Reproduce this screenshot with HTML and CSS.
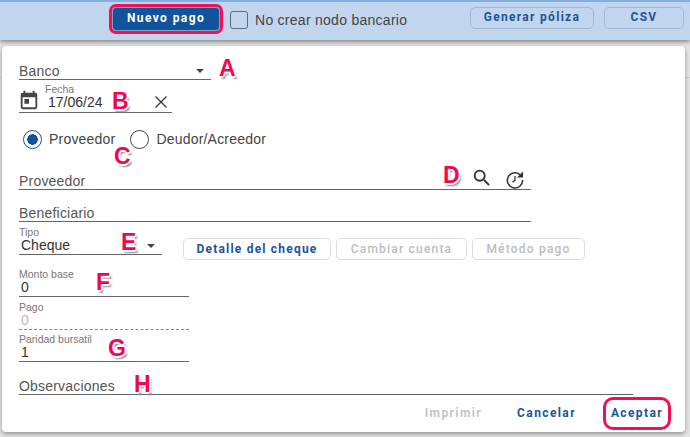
FILE: index.html
```html
<!DOCTYPE html>
<html lang="en">

<head>
    <meta http-equiv="Content-Type" content="text/html; charset=UTF-8">
    <meta name="viewport" content="width=device-width, initial-scale=1.0">
    <title>Nuevo pago</title>
    <link rel="stylesheet" href="styles.css">
</head>

<body>

    <div class="toolbar">
        <button class="btn-primary">Nuevo pago</button>
        <label class="check"><span class="check-box"></span>No crear nodo bancario</label>
        <div class="toolbar-right">
            <button class="btn-tool btn-poliza">Generar póliza</button>
            <button class="btn-tool btn-csv">CSV</button>
        </div>
    </div>

    <div class="dialog">
        <div class="form">
            <div class="field f-banco w-banco">
                <span class="placeholder">Banco</span>
                <span class="arrow"></span>
                <span class="mark mark-a">A</span>
            </div>

            <div class="field f-fecha w-fecha">
                <svg class="icon-cal" width="22" height="22" viewBox="0 0 24 24"><path fill="#444" d="M19 4h-1V2h-2v2H8V2H6v2H5a2 2 0 0 0-2 2v14a2 2 0 0 0 2 2h14a2 2 0 0 0 2-2V6a2 2 0 0 0-2-2zm0 16H5V9h14v11zM7 11h5v5H7z"/></svg>
                <div class="fecha-col">
                    <span class="small-label">Fecha</span>
                    <span class="value">17/06/24</span>
                </div>
                <svg class="icon-x" width="12" height="12" viewBox="0 0 12 12"><path stroke="#333" stroke-width="1.2" fill="none" d="M.5.5l11 11M11.5.5l-11 11"/></svg>
                <span class="mark mark-b">B</span>
            </div>

            <div class="radios">
                <span class="radio radio-on"></span>
                <span class="radio-text">Proveedor</span>
                <span class="radio"></span>
                <span class="radio-text">Deudor/Acreedor</span>
                <span class="mark mark-c">C</span>
            </div>

            <div class="field f-prov w-prov">
                <span class="placeholder">Proveedor</span>
                <svg class="icon-search" width="22" height="22" viewBox="0 0 24 24"><path fill="#333" d="M15.5 14h-.79l-.28-.27A6.47 6.47 0 0 0 16 9.5 6.5 6.5 0 1 0 9.5 16c1.61 0 3.09-.59 4.23-1.57l.27.28v.79l5 4.99L20.49 19l-4.99-5zm-6 0C7.01 14 5 11.99 5 9.5S7.01 5 9.5 5 14 7.01 14 9.5 11.99 14 9.5 14z"/></svg>
                <svg class="icon-history" width="20" height="20" viewBox="0 0 20 20"><path fill="none" stroke="#333" stroke-width="1.5" d="M15.6 5.2A7.6 7.6 0 1 0 17.6 10"/><path fill="#333" d="M18 1.5v6h-6z"/><path fill="none" stroke="#333" stroke-width="1.3" d="M10 6v4.4l-2.6 1.8"/></svg>
                <span class="mark mark-d">D</span>
            </div>

            <div class="field f-benef w-prov">
                <span class="placeholder">Beneficiario</span>
            </div>

            <div class="tipo-row">
                <div class="field f-tipo w-tipo">
                    <div class="stack">
                        <span class="small-label">Tipo</span>
                        <span class="value">Cheque</span>
                    </div>
                    <span class="arrow"></span>
                    <span class="mark mark-e">E</span>
                </div>
                <button class="btn-form">Detalle del cheque</button>
                <button class="btn-form btn-off btn-cuenta">Cambiar cuenta</button>
                <button class="btn-form btn-off btn-metodo">Método pago</button>
            </div>

            <div class="field f-monto w-monto">
                <div class="stack">
                    <span class="small-label">Monto base</span>
                    <span class="value">0</span>
                </div>
                <span class="mark mark-f">F</span>
            </div>

            <div class="field f-pago w-monto field-off">
                <div class="stack">
                    <span class="small-label">Pago</span>
                    <span class="value value-off">0</span>
                </div>
            </div>

            <div class="field f-paridad w-monto">
                <div class="stack">
                    <span class="small-label">Paridad bursatil</span>
                    <span class="value">1</span>
                </div>
                <span class="mark mark-g">G</span>
            </div>

            <div class="field f-obs w-obs">
                <span class="placeholder">Observaciones</span>
                <span class="mark mark-h">H</span>
            </div>
        </div>

        <div class="footer">
            <button class="btn-text btn-text-off">Imprimir</button>
            <button class="btn-text btn-cancel">Cancelar</button>
            <button class="btn-text btn-accept">Aceptar</button>
        </div>
    </div>

</body>

</html>
```

FILE: styles.css
```css
html,
body {
    margin: 0;
    height: 437px;
    overflow: hidden;
}

body {
    font-family: "Liberation Sans", Arial, sans-serif;
    background: linear-gradient(#cfcfcf, #cfcfcf) 0 77px / 100% 1px no-repeat #e3e3e3;
    color: #444;
}

button {
    font-family: Roboto, "Liberation Sans", sans-serif;
    cursor: pointer;
}

.toolbar {
    height: 38px;
    border-top: 2px solid #84ade2;
    background-color: #c1d6ee;
    box-shadow: 0 2px 4px rgba(0, 0, 0, 0.4);
    display: flex;
    align-items: flex-start;
    padding-left: 112px;
    padding-right: 6px;
}

.btn-primary {
    width: 108px;
    height: 24px;
    margin-top: 5px;
    background-color: #11549c;
    color: white;
    border: 1px solid #7fa0c8;
    border-radius: 4px;
    font-size: 12px;
    font-weight: 700;
    letter-spacing: 1.4px;
    padding: 0 0 3px;
    outline: 3px solid #f0105a;
    outline-offset: 0;
}

.check {
    display: flex;
    align-items: center;
    margin-top: 9px;
    margin-left: 10px;
    font-size: 14px;
    letter-spacing: .27px;
    color: #444;
}

.check-box {
    width: 16px;
    height: 16px;
    margin-right: 7px;
    border: 1px solid #5d6b7a;
    border-radius: 3px;
}

.toolbar-right {
    display: flex;
    gap: 10px;
    margin-left: auto;
}

.btn-tool {
    height: 22px;
    margin-top: 5px;
    background: transparent;
    border: 1px solid #a3b9d3;
    border-radius: 5px;
    color: #1d5499;
    font-size: 12px;
    font-weight: 700;
    letter-spacing: 1.3px;
    padding: 0 0 3px;
}

.btn-poliza {
    width: 124px;
}

.btn-csv {
    width: 80px;
}

.dialog {
    width: 683px;
    height: 386px;
    margin: 6px 0 0 2px;
    background-color: white;
    border-radius: 4px;
    box-shadow: 0 2px 4px rgba(0, 0, 0, 0.35);
    display: flex;
    flex-direction: column;
}

.form {
    padding: 14px 0 0 17px;
    height: 335px;
    box-sizing: border-box;
}

.field {
    display: flex;
    align-items: flex-end;
    position: relative;
    box-sizing: border-box;
    border-bottom: 1px solid #666;
    font-size: 14px;
}

.field-off {
    border-bottom: 1px dashed #888;
}

.w-banco {
    width: 192px;
}

.w-fecha {
    width: 153px;
}

.w-prov {
    width: 512px;
}

.w-tipo {
    width: 143px;
}

.w-monto {
    width: 170px;
}

.w-obs {
    width: 614px;
}

.f-banco {
    height: 20px;
}

.f-fecha {
    height: 33px;
}

.f-prov {
    height: 25px;
}

.f-benef {
    height: 32px;
}

.f-tipo {
    height: 33px;
}

.f-monto {
    height: 42px;
}

.f-pago {
    height: 33px;
}

.f-paridad {
    height: 32px;
}

.f-obs {
    height: 33px;
}

.placeholder {
    color: #555;
    letter-spacing: .2px;
    line-height: 15px;
}

.value {
    color: #333;
    line-height: 15px;
    padding-left: 2px;
    padding-bottom: 1px;
}

.value-off {
    color: #bbb;
}

.small-label {
    font-size: 10.5px;
    line-height: 11px;
    color: #777;
}

.stack {
    display: flex;
    flex-direction: column;
}

.arrow {
    width: 0;
    height: 0;
    margin-left: auto;
    margin-right: 7px;
    margin-bottom: 6px;
    border-top: 4px solid #444;
    border-left: 4px solid transparent;
    border-right: 4px solid transparent;
}

.icon-cal {
    margin-bottom: 1px;
    margin-left: -1px;
    margin-right: 5px;
}

.fecha-col {
    display: flex;
    flex-direction: column;
    padding-bottom: 1px;
}

.fecha-col .value {
    padding-left: 3px;
}

.icon-x {
    margin-left: auto;
    margin-right: 5px;
    margin-bottom: 4px;
}

.icon-search {
    margin-left: auto;
    margin-right: 12px;
}

.icon-history {
    margin-right: 6px;
    margin-bottom: -1px;
}

.radios {
    height: 52px;
    display: flex;
    align-items: center;
    position: relative;
    padding-left: 4px;
    font-size: 14px;
    letter-spacing: .2px;
    box-sizing: border-box;
}

.radio {
    width: 19px;
    height: 19px;
    box-sizing: border-box;
    border: 1px solid #444;
    border-radius: 50%;
    flex-shrink: 0;
}

.radio-on {
    border: 1.5px solid #11549c;
    background: radial-gradient(circle, #11549c 0 5px, transparent 5.5px);
}

.radio-text {
    margin-left: 7px;
    margin-right: 15px;
    color: #444;
}

.tipo-row {
    display: flex;
    align-items: flex-end;
}

.btn-form {
    height: 22px;
    margin-left: 5px;
    margin-bottom: -5px;
    background: white;
    border: 1px solid #ddd;
    border-radius: 5px;
    color: #1d5499;
    font-size: 12px;
    font-weight: 700;
    letter-spacing: 1.2px;
    padding: 0;
    width: 148px;
}

.tipo-row .field + .btn-form {
    margin-left: 21px;
}

.btn-off {
    color: #bdbdbd;
    font-weight: 500;
}

.btn-cuenta {
    width: 131px;
}

.btn-metodo {
    width: 113px;
}

.footer {
    display: flex;
    align-items: center;
    justify-content: flex-end;
    height: 51px;
    padding-top: 13px;
    padding-right: 17px;
    box-sizing: border-box;
}

.btn-text {
    background: none;
    border: none;
    color: #1d5499;
    font-size: 12px;
    font-weight: 700;
    letter-spacing: 1.4px;
    padding: 0;
}

.btn-text-off {
    color: #c4c4c4;
    margin-right: 35px;
}

.btn-cancel {
    margin-right: 30px;
}

.btn-accept {
    width: 62px;
    height: 27px;
    border-radius: 7px;
    outline: 3px solid #f0105a;
}

.mark {
    position: absolute;
    font-family: "Liberation Sans", sans-serif;
    font-size: 23px;
    font-weight: 700;
    line-height: 22px;
    letter-spacing: 0;
    color: #f5054f;
    text-shadow: 2px 0 0 white, -2px 0 0 white, 0 2px 0 white, 0 -2px 0 white, 1px 1px 0 white, -1px -1px 0 white, 1px -1px 0 white, -1px 1px 0 white, 2px 3px 2px #888;
}

.mark-a {
    left: 200px;
    top: -3px;
}

.mark-b {
    left: 93px;
    top: 10px;
}

.mark-c {
    left: 95px;
    top: 32px;
}

.mark-d {
    left: 424px;
    top: -1px;
}

.mark-e {
    left: 102px;
    top: 9px;
}

.mark-f {
    left: 77px;
    top: 16px;
}

.mark-g {
    left: 89px;
    top: 7px;
}

.mark-h {
    left: 115px;
    top: 11px;
}
```
